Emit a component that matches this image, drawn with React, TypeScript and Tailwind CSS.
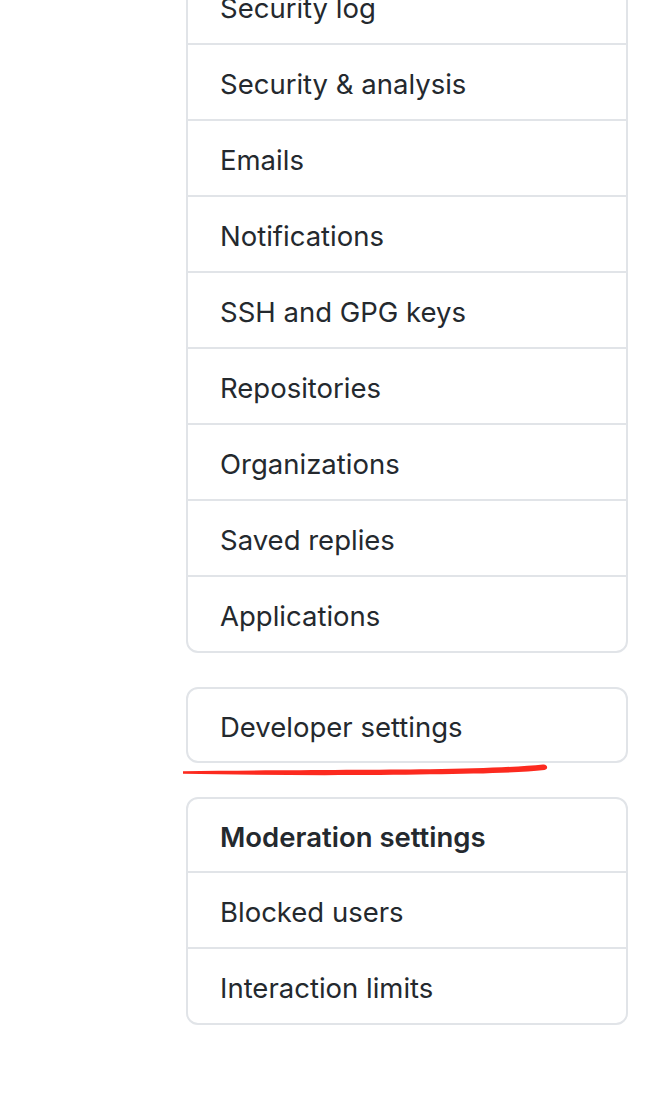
export default function App() {
  const accountItems = [
    "Security log",
    "Security & analysis",
    "Emails",
    "Notifications",
    "SSH and GPG keys",
    "Repositories",
    "Organizations",
    "Saved replies",
    "Applications",
  ]

  return (
    <div
      className="w-[652px] h-[1098px] overflow-hidden bg-white text-[#24292e]"
      style={{ fontFamily: "Inter, 'Noto Sans', Arial, sans-serif" }}
    >
      <div className="ml-[186px] w-[442px]">
        {/* Account settings menu (top cut off) */}
        <nav className="-mt-[33px] border-2 border-[#e1e4e8] rounded-[12px] overflow-hidden">
          {accountItems.map((item, index) => (
            <div
              key={index}
              className={
                index === accountItems.length - 1
                  ? "h-[74px] flex items-center pl-[32px] pt-[5px] text-[27.5px]"
                  : "h-[76px] flex items-center pl-[32px] pt-[5px] text-[27.5px] border-b-2 border-[#e1e4e8]"
              }
            >
              {item}
            </div>
          ))}
        </nav>

        {/* Developer settings */}
        <div className="relative mt-[34px]">
          <div className="border-2 border-[#e1e4e8] rounded-[12px] h-[76px] flex items-center pl-[32px] pt-[5px] text-[27.5px]">
            Developer settings
          </div>
          <svg
            className="absolute left-[-6px] top-[68px] pointer-events-none"
            width="380"
            height="30"
            viewBox="180 755 380 30"
          >
            <path
              d="M183 771.2 C 260 770.2 360 770 430 769.3 C 480 768.6 520 766.8 543 764.4 C 548 764 548.5 769.4 544.5 770 C 520 772.8 480 773.5 430 774.3 C 360 775.6 260 775.4 183 773.8 Z"
              fill="#fc2a1f"
            />
          </svg>
        </div>

        {/* Moderation settings */}
        <nav className="mt-[34px] border-2 border-[#e1e4e8] rounded-[12px] overflow-hidden">
          <div className="h-[74px] flex items-center pl-[32px] pt-[5px] text-[27.5px] font-semibold border-b-2 border-[#e1e4e8]">
            Moderation settings
          </div>
          <div className="h-[76px] flex items-center pl-[32px] pt-[5px] text-[27.5px] border-b-2 border-[#e1e4e8]">
            Blocked users
          </div>
          <div className="h-[74px] flex items-center pl-[32px] pt-[5px] text-[27.5px]">
            Interaction limits
          </div>
        </nav>
      </div>
    </div>
  )
}
